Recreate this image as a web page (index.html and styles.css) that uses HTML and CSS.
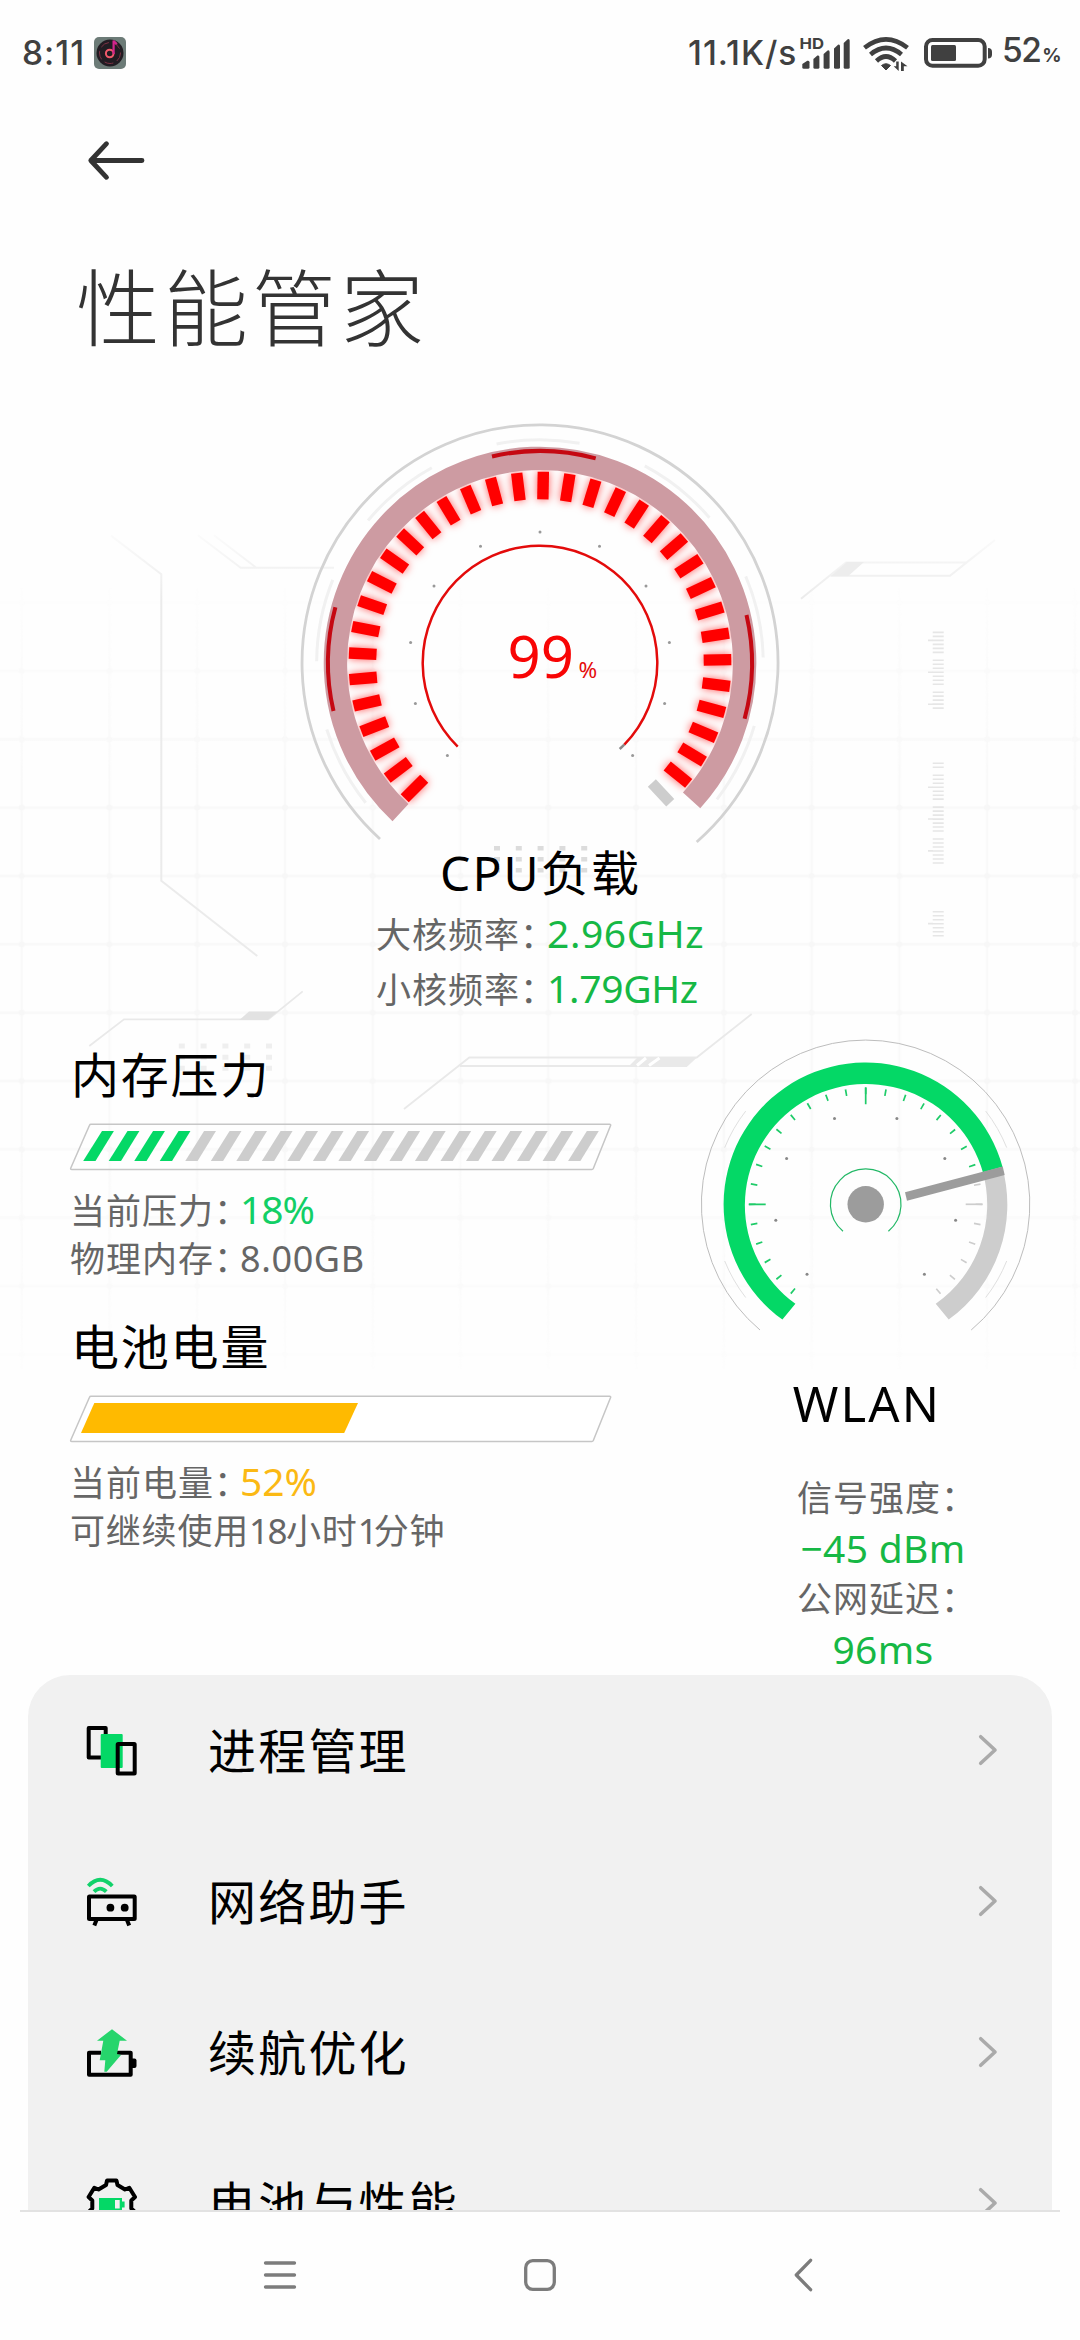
FILE: index.html
```html
<!DOCTYPE html>
<html lang="zh-CN">
<head>
<meta charset="utf-8">
<title>性能管家</title>
<link rel="stylesheet" href="styles.css">
</head>
<body>
<svg class="backdrop" viewBox="0 0 1080 2340" aria-hidden="true">
  <defs>
    <pattern id="grid" x="-22.2" y="568.4" width="87.77" height="68.35" patternUnits="userSpaceOnUse">
      <path d="M43.9 0V68.35M0 34.2H87.77" stroke="#f9f9f9" stroke-width="2.4"/>
      <circle cx="43.9" cy="34.2" r="3" fill="#f7f7f7"/>
    </pattern>
    <linearGradient id="fade" x1="0" y1="0" x2="0" y2="1">
      <stop offset="0" stop-color="#fff" stop-opacity=".1"/>
      <stop offset=".25" stop-color="#fff"/>
      <stop offset=".7" stop-color="#fff"/>
      <stop offset="1" stop-color="#fff" stop-opacity=".15"/>
    </linearGradient>
    <mask id="fadeMask"><rect y="588" width="1080" height="781" fill="url(#fade)"/></mask>
    <linearGradient id="topLine" gradientUnits="userSpaceOnUse" x1="0" y1="530" x2="0" y2="600">
      <stop offset="0" stop-color="#fcfcfc"/>
      <stop offset="1" stop-color="#ebebeb"/>
    </linearGradient>
  </defs>
  <rect y="588" width="1080" height="781" fill="url(#grid)" mask="url(#fadeMask)"/>
  <g fill="none" stroke-width="2" stroke="url(#topLine)">
    <path d="M111 535.6L161.3 574.2V880.8L257.3 956"/>
    <path d="M198 535.2L240.7 567.7H334M214 535.2L256 567.5"/>
    <path d="M801 598.7L846 562.4H966.7L995 540M830.7 575.8H950L966.7 562.4"/>
  </g>
  <path d="M830.7 576.3L847 562H864L848 576.3Z" fill="#ededed"/>
  <g fill="none" stroke="#e9e9e9" stroke-width="1.8">
    <path d="M89.3 1046L124 1019.3H268.3L302.7 991.4"/>
    <path d="M404 1109L469.3 1057.5H696.7L751.7 1014M460 1066H686.7"/>
  </g>
  <path d="M239.3 1020L249 1011.5H278L267.5 1020Z" fill="#e2e2e2"/>
  <path d="M628 1067L638 1057H697.5L686.7 1067Z" fill="#e9e9e9"/>
  <path d="M637 1065.5L646 1058M649 1065.5L659.5 1058" stroke="#fff" stroke-width="3"/>
  <g stroke="#efefef" stroke-width="5" stroke-dasharray="6 15.8">
    <path d="M178.8 1046H275M178.8 1057.2H275M178.8 1068.2H275"/>
  </g>
  <g stroke="#dcdcdc" stroke-width="4.6" stroke-dasharray="6 15.8">
    <path d="M494 848.3H588M494 859.3H588M494 870.2H588"/>
  </g>
  <g stroke="#e6e6e6" stroke-width="11" stroke-dasharray="1.6 2.385 1.6 2.385 1.6 2.385 1.6 2.385 1.6 2.385 1.6 2.385 1.6 6.37">
    <path d="M938.2 631.6V709.3" stroke-dashoffset="3.985"/>
    <path d="M938.2 762.5V864" stroke-dashoffset="19.925"/>
    <path d="M938.2 911V937"/>
  </g>
  <path d="M928 640.4h5M928 672.3h5M928 704.2h5M928 787.2h5M928 819h5M928 850.9h5M928 923.6h5" stroke="#e6e6e6" stroke-width="1.6"/>
</svg>

<header class="status">
  <span class="clock">8:11</span>
  <svg class="music" viewBox="0 0 32 32">
    <rect width="32" height="32" rx="5" fill="#6c7b77"/>
    <circle cx="16" cy="16" r="13.5" fill="#211c22"/>
    <circle cx="16" cy="16" r="10.5" fill="none" stroke="#7d3244" stroke-width="1" stroke-dasharray="9 4"/>
    <circle cx="15.7" cy="16.5" r="3.8" fill="none" stroke="#f0596a" stroke-width="2"/>
    <path d="M19.6 17V3.5c.6 1.8 2.4 2 3 4" fill="none" stroke="#d3248c" stroke-width="2.2"/>
  </svg>
  <span class="speed">11.1K/s</span>
  <svg class="signals" viewBox="798 30 196 44">
    <text x="799.5" y="47.7" class="hd" textLength="24.5" lengthAdjust="spacingAndGlyphs">HD</text>
    <g fill="#404040">
      <path d="M802.3 63l5-3.2q2.2-.6 2.2 1.5V66.3q0 1.5-1.5 1.5h-4.2q-1.5 0-1.5-1.5Z"/>
      <path d="M813.4 58l4-3.4q2-.6 2 1.5V66.3q0 1.5-1.5 1.5h-3q-1.5 0-1.5-1.5Z"/>
      <path d="M823.6 53l4-3.6q2-.6 2 1.5V66.3q0 1.5-1.5 1.5h-3q-1.5 0-1.5-1.5Z"/>
      <path d="M834 47.5l4-3.8q2-.6 2 1.5V66.3q0 1.5-1.5 1.5h-3q-1.5 0-1.5-1.5Z"/>
      <path d="M843.7 42l4-3.8q2-.6 2 1.5V66.3q0 1.5-1.5 1.5h-3q-1.5 0-1.5-1.5Z"/>
      <path d="M881.5 64.5q4.5-3.5 9 0l-4.5 4.5Z" stroke="#404040" stroke-width="1"/>
      <path d="M898.7 60.5v9.5l-5-4.7h2.5v-4.8ZM901 70v-9.5l6.5 4.7h-3.7v4.8Z"/>
      <rect x="931" y="44" width="25" height="16" rx="1.5"/>
      <path d="M988 47q4 0 4 4v2.5q0 4-4 4Z"/>
    </g>
    <g fill="none" stroke="#404040" stroke-width="4.6">
      <path d="M864.5 46.8Q886 30 907.5 46.8"/>
      <path d="M870.5 53.5Q886 40.5 901.5 53.5"/>
      <path d="M876.5 60Q886 51 895.5 60"/>
    </g>
    <rect x="926" y="39" width="58.7" height="25.7" rx="6.5" fill="none" stroke="#404040" stroke-width="4"/>
  </svg>
  <span class="level">52<small>%</small></span>
</header>

<section class="heading">
  <svg class="back" viewBox="0 0 60 42"><path d="M18.5 3.7L2.8 20.5L18.5 37.3M2.8 20.5H54" fill="none" stroke="#333" stroke-width="4.8" stroke-linecap="round" stroke-linejoin="round"/></svg>
  <h1>性能管家</h1>
</section>

<section class="cpu">
  <svg class="cpu-gauge" viewBox="-240 -243 480 423">
    <defs>
      <rect id="t1" x="-5.7" y="-191.3" width="11.4" height="27.6"/>
      <g id="t2"><use href="#t1"/><use href="#t1" transform="rotate(8)"/></g>
      <g id="t4"><use href="#t2"/><use href="#t2" transform="rotate(16)"/></g>
      <g id="t8"><use href="#t4"/><use href="#t4" transform="rotate(32)"/></g>
      <g id="t16"><use href="#t8"/><use href="#t8" transform="rotate(64)"/></g>
      <g id="t32"><use href="#t16"/><use href="#t16" transform="rotate(128)"/></g>
      <path id="mark" d="M-48 -206.5A212 212 0 0 1 55.7 -204.6"/>
    </defs>
    <path d="M-160 176A238 238 0 1 1 156.7 179" fill="none" stroke="#d3d3d3" stroke-width="2.8"/>
    <path d="M-174.3 139.7A223.3 223.3 0 1 1 176.9 136.3" fill="none" stroke="#f1f1f1" stroke-width="3" stroke-dasharray="83.4 69.2"/>
    <g class="glow" fill="#f00">
      <use href="#t32" transform="rotate(-135)"/>
      <use href="#t2" transform="rotate(121)"/>
    </g>
    <path d="M-139.5 149.6A204.6 204.6 0 1 1 151.6 137.4" fill="none" stroke="#cd9ba2" stroke-width="23.4"/>
    <g fill="none" stroke="#c50812" stroke-width="4">
      <use href="#mark"/><use href="#mark" transform="rotate(90)"/><use href="#mark" transform="rotate(-90)"/>
    </g>
    <rect x="-5.5" y="-191" width="11" height="27" fill="#cdcdcd" transform="rotate(137)"/>
    <path d="M-82.3 83.6A117.3 117.3 0 1 1 84.3 81.6" fill="none" stroke="#e30b0b" stroke-width="2.5"/>
    <path d="M84.3 81.6L79.7 86" stroke="#888" stroke-width="2.5"/>
    <g fill="#999">
      <circle cy="-131" r="1.5"/>
      <circle cx="59.5" cy="-116.7" r="1.5"/><circle cx="-59.5" cy="-116.7" r="1.5"/>
      <circle cx="106" cy="-77" r="1.5"/><circle cx="-106" cy="-77" r="1.5"/>
      <circle cx="129.4" cy="-20.5" r="1.5"/><circle cx="-129.4" cy="-20.5" r="1.5"/>
      <circle cx="124.6" cy="40.5" r="1.5"/><circle cx="-124.6" cy="40.5" r="1.5"/>
      <circle cx="92.6" cy="92.6" r="1.5"/><circle cx="-92.6" cy="92.6" r="1.5"/>
    </g>
    <text class="load" x="-32.5" y="14.7">99</text>
    <text class="load-unit" x="38.6" y="14.7">%</text>
  </svg>
  <h2>CPU负载</h2>
  <p class="freq"><span class="key">大核频率：</span><b>2.96GHz</b></p>
  <p class="freq"><span class="key">小核频率：</span><b class="narrow">1.79GHz</b></p>
</section>

<main class="board">
  <div class="left">
    <section class="meter">
      <h2>内存压力</h2>
      <svg viewBox="0 0 550 54">
        <path d="M21 4.3H539.5q1.6 0 1 1.5L523.3 48.5q-.4 1-1.5 1H1.8q-1.6 0-1-1.5L19.5 5.3q.4-1 1.5-1Z" fill="none" stroke="#c6c6c6" stroke-width="1.5"/>
        <defs>
          <path id="s1" d="M13.2 41L32 11H43.9L25.5 41Z"/>
          <g id="s2"><use href="#s1"/><use href="#s1" x="25.52"/></g>
          <g id="s4"><use href="#s2"/><use href="#s2" x="51.04"/></g>
          <g id="s8"><use href="#s4"/><use href="#s4" x="102.08"/></g>
        </defs>
        <use href="#s4" fill="#04d866"/>
        <g fill="#cdcdcd"><use href="#s8" x="102.08"/><use href="#s8" x="306.24"/></g>
      </svg>
      <p><span class="key">当前压力：</span><b class="mint">18%</b></p>
      <p><span class="key">物理内存：</span><span class="plain">8.00GB</span></p>
    </section>
    <section class="meter">
      <h2>电池电量</h2>
      <svg viewBox="0 0 550 54">
        <path d="M21 4.3H539.5q1.6 0 1 1.5L523.3 48.5q-.4 1-1.5 1H1.8q-1.6 0-1-1.5L19.5 5.3q.4-1 1.5-1Z" fill="#fff" stroke="#c6c6c6" stroke-width="1.5"/>
        <path d="M24.3 11H288L274.2 41H11Z" fill="#ffba00"/>
      </svg>
      <p><span class="key">当前电量：</span><b class="amber">52%</b></p>
      <p class="remain">可继续使用<i>18</i>小时<i class="one">1</i>分钟</p>
    </section>
  </div>
  <section class="wlan">
    <svg class="wlan-gauge" viewBox="-169.7 -159.3 340 300">
      <path d="M-105.7 125.7A164.2 164.2 0 1 1 105.5 125.7" fill="none" stroke="#bdbdbd" stroke-width="1"/>
      <path d="M-141 -56.7A152 152 0 0 1 -120 -93.2M141 -56.7A152 152 0 0 0 120 -93.2M-141 56.7A152 152 0 0 0 -120 93.2M141 56.7A152 152 0 0 1 120 93.2" fill="none" stroke="#e0e0e0" stroke-width="1"/>
      <path d="M136.5 -37.5A142 142 0 0 1 83 115.3L70 99.5A121.3 121.3 0 0 0 117 -32.5Z" fill="#cdcdcd"/>
      <path d="M-83.3 115.3A142 142 0 1 1 136.8 -37.5L117.2 -32A121.3 121.3 0 1 0 -70.3 99.5Z" fill="#04d866"/>
      <g fill="none" stroke-width="6.6" stroke-dasharray="1.7 18.075">
        <path d="M-72.17 87.33A113.3 113.3 0 1 1 107.1 -36.9" stroke="#1fcb69"/>
        <path d="M111.4 -20.5A113.3 113.3 0 0 1 71.3 88.05" stroke="#cdcdcd"/>
      </g>
      <path d="M0 -117V-100M-117 0H-100" stroke="#1fcb69" stroke-width="1.7"/>
      <path d="M100 0H117" stroke="#cdcdcd" stroke-width="1.7"/>
      <g fill="#888">
        <circle cx="-31.2" cy="-85.8" r="1.5"/><circle cx="31.2" cy="-85.8" r="1.5"/>
        <circle cx="-79.1" cy="-45.7" r="1.5"/><circle cx="79.1" cy="-45.7" r="1.5"/>
        <circle cx="-89.9" cy="15.9" r="1.5"/><circle cx="89.9" cy="15.9" r="1.5"/>
        <circle cx="-58.7" cy="69.9" r="1.5"/><circle cx="58.7" cy="69.9" r="1.5"/>
      </g>
      <path d="M-22.7 27A35.3 35.3 0 1 1 22.7 27" fill="none" stroke="#22b866" stroke-width="1.2"/>
      <circle r="18.2" fill="#9c9c9c"/>
      <path d="M39.3 -12L137 -37.7L139 -29.3L41.3 -3.6Z" fill="#9c9c9c"/>
    </svg>
    <h2>WLAN</h2>
    <div class="link">
      <p>信号强度：</p>
      <p class="value">−45 dBm</p>
      <p>公网延迟：</p>
      <p class="value">96ms</p>
    </div>
  </section>
</main>

<nav class="menu">
  <a class="item">
    <svg class="icon" viewBox="80 1719 64 62">
      <path d="M101 1756.5H88.7V1727H105.7V1733" fill="none" stroke="#000" stroke-width="4" stroke-linejoin="round"/>
      <rect x="100.7" y="1733" width="22" height="34" rx="1" fill="#04d866"/>
      <rect x="117.7" y="1743" width="17" height="29.6" rx=".5" fill="none" stroke="#000" stroke-width="4" stroke-linejoin="round"/>
    </svg>
    <span>进程管理</span>
    <svg class="chev" viewBox="0 0 20 32"><path d="M2.7 2.7L17 16L2.7 29.3"/></svg>
  </a>
  <a class="item">
    <svg class="icon" viewBox="80 1870 64 62">
      <g fill="none" stroke="#12d26b" stroke-width="3.8">
        <path d="M88.3 1885Q100.2 1872.5 112.3 1885"/>
        <path d="M94 1890.7Q100.2 1884.5 106.3 1890.7"/>
      </g>
      <rect x="89" y="1895.5" width="45.7" height="22.5" rx=".5" fill="none" stroke="#000" stroke-width="4" stroke-linejoin="round"/>
      <circle cx="110.4" cy="1906.7" r="3.9"/><circle cx="124.7" cy="1906.7" r="3.9"/>
      <path d="M96.5 1919L94.3 1924.5M127 1919L129.2 1924.5" stroke="#000" stroke-width="4"/>
    </svg>
    <span>网络助手</span>
    <svg class="chev" viewBox="0 0 20 32"><path d="M2.7 2.7L17 16L2.7 29.3"/></svg>
  </a>
  <a class="item">
    <svg class="icon" viewBox="80 2021 64 62">
      <path d="M101 2051.7H89V2073.7H130.7V2051.7H116" fill="none" stroke="#000" stroke-width="4" stroke-linejoin="round"/>
      <path d="M132 2057.5h2.5q2 0 2 2v5.5q0 2-2 2H132Z"/>
      <path d="M112 2028.2L127 2039.7H119.7L117 2053L121 2054L106.7 2070.7H104.3L105.3 2059.3H99.7L103.3 2039.7H97Z" fill="#26d56c"/>
    </svg>
    <span>续航优化</span>
    <svg class="chev" viewBox="0 0 20 32"><path d="M2.7 2.7L17 16L2.7 29.3"/></svg>
  </a>
  <a class="item">
    <svg class="icon" viewBox="80 2172 64 62">
      <path d="M106 2184L107 2179.6H116.5L117.5 2184L125 2188.5L129.3 2186.8L135 2196L131.3 2199.5V2207.5L135 2211L129.3 2220.5L125 2218.5L117.5 2223L116.5 2227.5H107L106 2223L98.5 2218.5L94.3 2220.5L88.6 2211L92.3 2207.5V2199.5L88.6 2196L94.3 2186.8L98.5 2188.5Z" fill="none" stroke="#000" stroke-width="4" stroke-linejoin="round"/>
      <path d="M99 2197h23v3.5h2.6v6H122v3.7H99Z" fill="#04d866"/>
      <rect x="115" y="2199" width="4.7" height="8.5" fill="#f1f1f1"/>
    </svg>
    <span>电池与性能</span>
    <svg class="chev" viewBox="0 0 20 32"><path d="M2.7 2.7L17 16L2.7 29.3"/></svg>
  </a>
</nav>

<footer class="keys">
  <svg viewBox="0 0 36 36"><path d="M3.5 6H32.5M3.5 18H32.5M3.5 30H32.5"/></svg>
  <svg viewBox="0 0 36 36"><rect x="3.7" y="3.7" width="28.6" height="28.6" rx="7"/></svg>
  <svg viewBox="0 0 36 36"><path d="M28.6 3.3L14.3 18L28.6 32.7"/></svg>
</footer>
</body>
</html>
```
FILE: styles.css
```css
* { box-sizing: border-box; }
body {
  margin: 0;
  width: 1080px;
  height: 2340px;
  position: relative;
  display: flex;
  flex-direction: column;
  overflow: hidden;
  background: #fefefe;
  color: #000;
  font-family: "Noto Sans", "Noto Sans CJK SC", sans-serif;
}
h1, h2, p { margin: 0; font-weight: 400; }
b, i { font-weight: 400; font-style: normal; }
svg { display: block; flex: none; overflow: visible; }

.backdrop {
  position: absolute;
  left: 0;
  top: 0;
  width: 1080px;
  height: 2340px;
  z-index: -1;
}

/* status bar */
.status {
  height: 105px;
  flex: none;
  display: flex;
  align-items: center;
  padding: 0 21px 0 22px;
  color: #404040;
  font: 500 33.5px/44px Inter, sans-serif;
}
.clock { width: 72px; letter-spacing: 1px; white-space: nowrap; }
.music { width: 32px; height: 32px; }
.speed { margin-left: auto; width: 110px; white-space: nowrap; letter-spacing: 1px; }
.signals { width: 196px; height: 44px; }
.hd { font: 700 15px Inter, sans-serif; fill: #404040; }
.level { width: 57px; margin-left: 8px; white-space: nowrap; letter-spacing: -1.5px; }
.level small { font-size: 19px; font-weight: 700; margin-left: 2px; }

/* page heading */
.heading { height: 315px; flex: none; padding: 35px 76px 0; }
.back { width: 60px; height: 42px; margin-left: 12px; }
h1 {
  margin-top: 62px;
  font: 300 84px/120px "Noto Sans CJK SC", sans-serif;
  letter-spacing: 4px;
  color: #333;
}

/* cpu */
.cpu {
  height: 625px;
  flex: none;
  display: flex;
  flex-direction: column;
  align-items: center;
}
.cpu-gauge { width: 480px; height: 423px; }
.glow { filter: drop-shadow(0 0 4px rgba(255, 0, 0, .65)); }
.load { font-size: 58px; fill: #f80505; }
.load-unit { font-size: 22.5px; fill: #e50c0c; }
h2 { font-size: 48px; line-height: 60px; white-space: nowrap; }
.cpu h2 { margin-bottom: 3px; padding-left: 1px; letter-spacing: 2.1px; }
.freq { height: 54.5px; width: 328px; line-height: 54.5px; white-space: nowrap; }
.key, .link p { font-size: 35px; letter-spacing: 1px; color: #666; }
.key { display: inline-block; width: 171px; font-feature-settings: "halt"; }
.freq b { font-size: 39px; letter-spacing: .6px; color: #16b845; }
.freq .narrow { letter-spacing: -.3px; }

/* meters and wlan */
.board {
  height: 630px;
  flex: none;
  display: flex;
}
.left { width: 696px; padding-left: 70px; }
.meter { height: 272px; }
.meter h2 { letter-spacing: 1.8px; padding-left: 1px; }
.meter svg { width: 550px; height: 54px; margin: 15px 0 10px; }
.meter p { height: 50px; line-height: 50px; white-space: nowrap; }
.meter b { font-size: 39px; }
.meter .key { width: 170px; }
.mint { color: #12cf66; letter-spacing: -1px; }
.amber { color: #fbb914; }
.plain { font-size: 36px; letter-spacing: .6px; color: #666; }
.meter .remain { font-size: 35px; letter-spacing: .8px; color: #666; }
.remain i { letter-spacing: -1.5px; }
.remain .one { letter-spacing: -4px; }

.wlan {
  width: 340px;
  display: flex;
  flex-direction: column;
  align-items: center;
}
.wlan-gauge { width: 340px; height: 300px; }
.wlan h2 { margin-top: 28px; padding-left: 2px; font-size: 49px; letter-spacing: 2.2px; }
.link { width: 172px; margin: 39px 0 0 34px; }
.link p { height: 50.5px; line-height: 51px; white-space: nowrap; font-feature-settings: "halt"; }
.link .value {
  line-height: 49.5px;
  font-size: 39px;
  letter-spacing: .3px;
  color: #16b845;
  display: flex;
  justify-content: center;
}

/* menu */
.menu {
  height: 535px;
  flex: none;
  margin: 0 28px;
  background: #f1f1f1;
  border-radius: 42px 42px 0 0;
  overflow: hidden;
}
.item {
  height: 151px;
  display: flex;
  align-items: center;
  padding: 0 54px 0 52px;
}
.icon { width: 64px; height: 62px; }
.item span { margin: 1px 0 0 64px; font-size: 48px; line-height: 60px; letter-spacing: 2.2px; }
.chev { width: 20px; height: 32px; margin: -2px 0 0 auto; fill: none; stroke: #aaa; stroke-width: 3.6; stroke-linecap: round; stroke-linejoin: round; }

/* system keys */
.keys {
  height: 130px;
  flex: none;
  margin: 0 20px;
  padding: 0 0 2px 242px;
  display: flex;
  align-items: center;
  gap: 224px;
  border-top: 2px solid #e2e2e2;
}
.keys svg { width: 36px; height: 36px; fill: none; stroke: #7c7c7c; stroke-width: 3.3; stroke-linecap: round; stroke-linejoin: round; }
```
